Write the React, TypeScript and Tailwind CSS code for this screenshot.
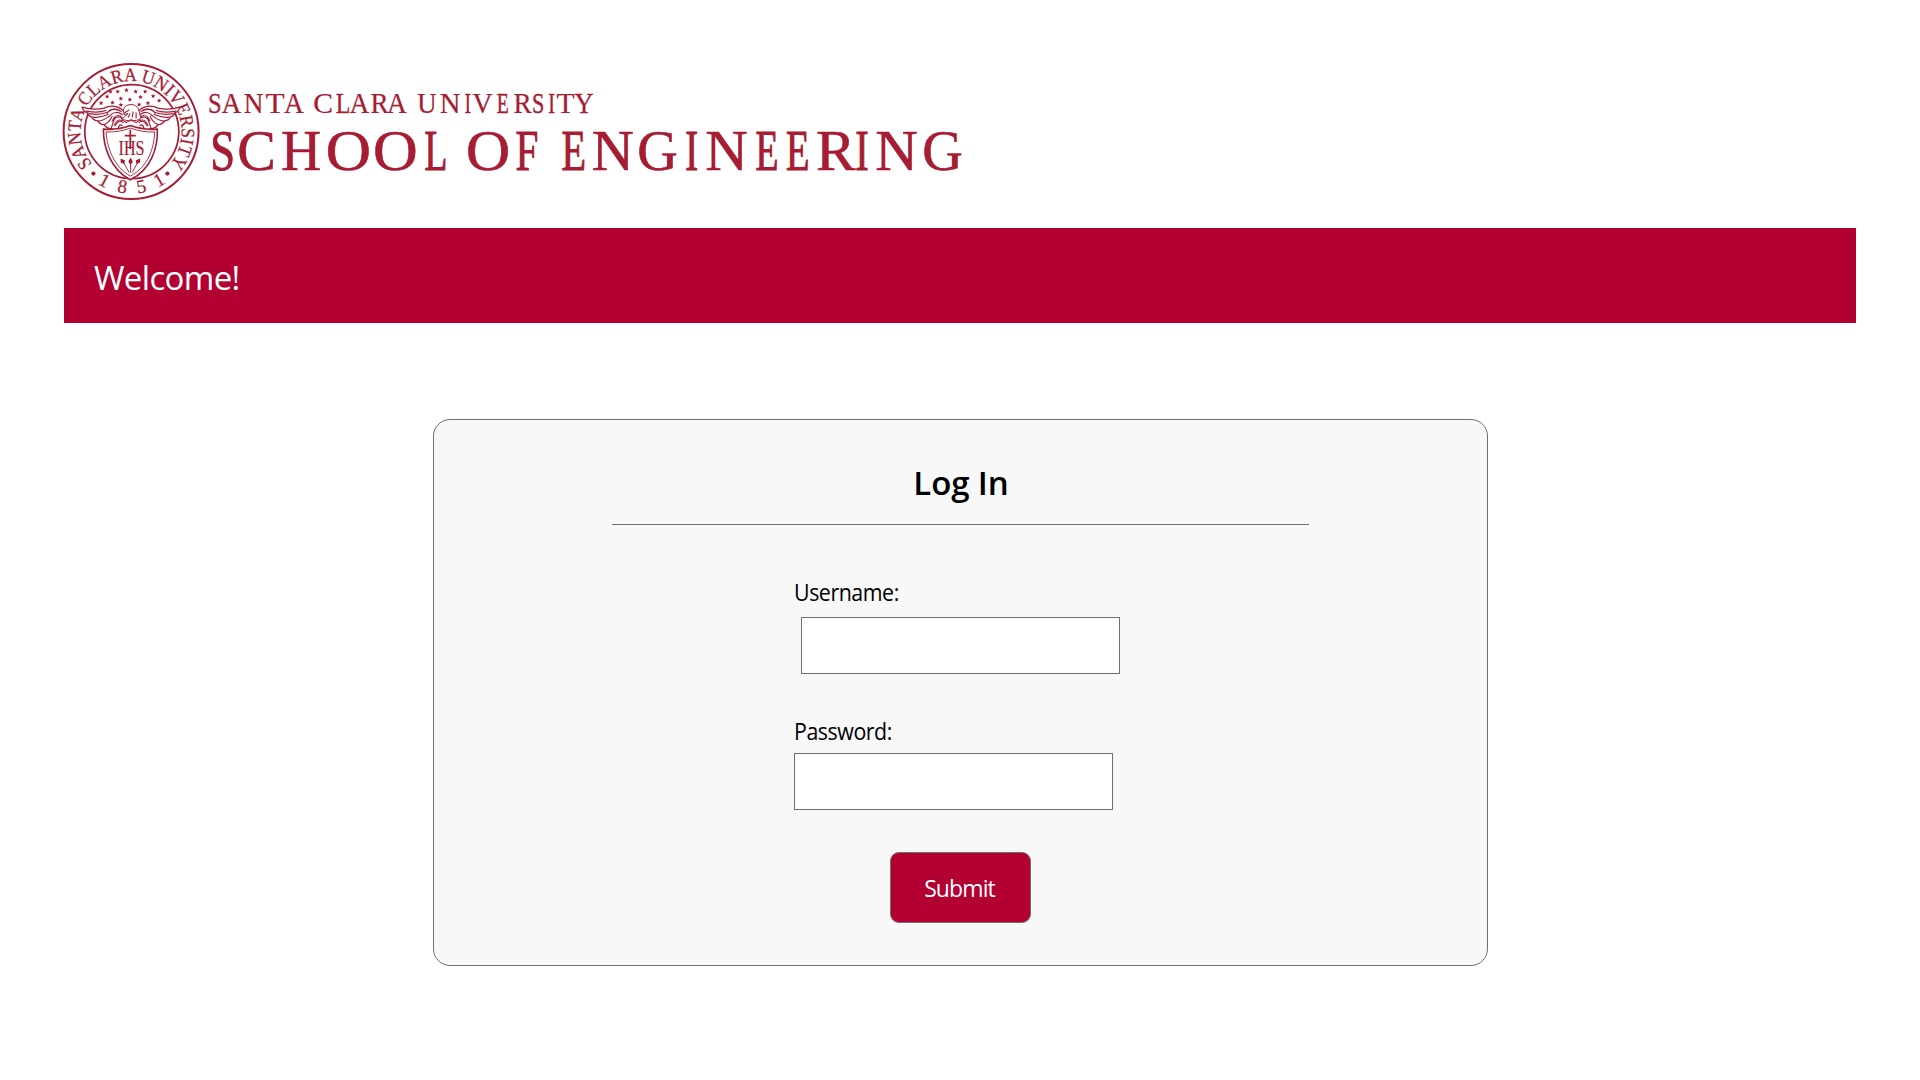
import React from "react";

const RED = "#a51c33";

type Glyph = [string, number, number];

// Liberation Serif capitals: ink left, ink right and advance, in ems.
const METRICS: Record<string, [number, number, number]> = {
  A: [0.015, 0.706, 0.722],
  C: [0.028, 0.633, 0.667],
  E: [0.012, 0.597, 0.611],
  F: [0.012, 0.546, 0.556],
  G: [0.032, 0.709, 0.722],
  H: [0.019, 0.702, 0.722],
  I: [0.018, 0.315, 0.333],
  L: [0.012, 0.598, 0.611],
  N: [0.012, 0.707, 0.722],
  O: [0.034, 0.688, 0.722],
  R: [0.017, 0.659, 0.667],
  S: [0.042, 0.491, 0.556],
  T: [0.017, 0.593, 0.611],
  U: [0.014, 0.705, 0.722],
  V: [0.016, 0.697, 0.722],
  Y: [0.022, 0.703, 0.722],
};

const LINE_ONE: Glyph[] = [
  ["S", 209, 220], ["A", 222, 241], ["N", 244, 263], ["T", 266, 284], ["A", 284.5, 303.5], [" ", 304, 310],
  ["C", 314, 332], ["L", 336, 350], ["A", 350, 369], ["R", 371, 388.5], ["A", 387.5, 406.5], [" ", 408, 414],
  ["U", 417.5, 436], ["N", 440, 460], ["I", 465, 470.5], ["V", 473, 492], ["E", 497, 508.5], ["R", 514, 531.5],
  ["S", 533, 543], ["I", 548.5, 554.5], ["T", 557, 574], ["Y", 575, 593],
];

const LINE_TWO: Glyph[] = [
  ["S", 212, 232], ["C", 239, 274], ["H", 282, 320], ["O", 328, 369], ["O", 375, 415.5], ["L", 425, 447], [" ", 450, 460],
  ["O", 468, 508], ["F", 516, 538], [" ", 541, 550],
  ["E", 562, 585.5], ["N", 592.5, 633], ["G", 639, 677], ["I", 686, 697.5], ["N", 706, 747], ["E", 756, 778],
  ["E", 786.5, 809], ["R", 817, 855], ["I", 856, 868], ["N", 876, 917], ["G", 924, 962],
];

function Inscription({ glyphs, size, y, weight }: { glyphs: Glyph[]; size: number; y: number; weight: number }) {
  return (
    <text y={y} fontSize={size} fill={RED} stroke={RED} strokeWidth={weight} xmlSpace="preserve">
      {glyphs.map(([char, left, right], i) => {
        const m = METRICS[char];
        if (!m) {
          return <tspan key={i} x={left}>{char}</tspan>;
        }
        const em = (right - left) / (m[1] - m[0]);
        // Condensed letters lose stem width, so they get a slightly heavier outline.
        const extra = Math.max(0, 1 - em / size) * size * 0.025;
        return (
          <tspan key={i} x={left - m[0] * em} textLength={m[2] * em} lengthAdjust="spacingAndGlyphs" strokeWidth={weight + extra}>
            {char}
          </tspan>
        );
      })}
    </text>
  );
}

const STARS: [number, number][] = [
  [-20.6, -40], [-13.4, -40], [-4.6, -41.4], [4.6, -40], [14, -40], [-24, -35], [-30, -28.5], [-18.6, -29], [-10.3, -33],
  [-1.3, -32], [9.4, -34.5], [8, -27], [16.8, -28.5], [22, -35.5], [28, -31], [-10.3, -26.8],
];

function Star({ x, y, r = 2.4 }: { x: number; y: number; r?: number }) {
  const pts = Array.from({ length: 10 }, (_, i) => {
    const a = (Math.PI * i) / 5 - Math.PI / 2;
    const k = i % 2 ? r * 0.45 : r;
    return `${x + k * Math.cos(a)},${y + k * Math.sin(a)}`;
  }).join(" ");
  return <polygon points={pts} fill={RED} />;
}

function Wing() {
  return (
    <g fill="none" stroke={RED} strokeLinecap="round" strokeLinejoin="round">
      <path fill="white" strokeWidth="1.3" d="M7 -20 C12 -26 20 -27 27 -23.5 C34 -22 41 -22 49 -24.5 C48 -21 46 -19.500 43 -18.500 C44 -18 43 -16 39 -14.500 C39 -12 36 -11 33 -10.500 C32 -8 30 -7 27 -7 C25 -4 22 -3 20 -3 C16 -1 11 -1 8 -4" />
      <path strokeWidth="1.1" d="M45 -20.500 C37 -19 31 -19 25 -21 M42 -18 C35 -16.500 30 -17 24 -19 M38 -14.500 C32 -13.500 28 -15 23 -17 M33 -10.500 C29 -10.500 25 -13 21 -16 M27 -7 C24 -8 21 -11 19 -15 M20 -3 C19 -6 18 -10 16 -14" />
      <path strokeWidth="1.200" d="M10 -20 C14 -23 20 -23 23 -20 M9 -17 C13 -20 18 -20 21 -16 M8 -13 C12 -16 15 -15 18 -11 M8 -9 C11 -12 14 -10 16 -6 M9 -6 C11 -8 12 -6 13 -3" />
      <path strokeWidth="1.100" strokeDasharray="1 1.1" d="M12 -21.500 C17 -24 22 -22 24 -18 M10 -15 C14 -18 18 -14 19 -10 M9 -11 C13 -13 15 -10 17 -6" />
    </g>
  );
}

function Seal() {
  return (
    <g transform="translate(131.1 131.600)">
      <circle r="67.500" fill="white" stroke={RED} strokeWidth="2" />
      <circle r="47" cx="0.700" cy="0" fill="none" stroke={RED} strokeWidth="1.700" />
      <defs>
        <path id="seal-top" d="M-38.700 32.500 A50.500 50.500 0 1 1 38.700 32.500" />
        <path id="seal-bottom" d="M-62 0 A62 62 0 0 0 62 0" />
      </defs>
      <g fill={RED} fontSize="19" stroke={RED} strokeWidth="0.250">
        <text>
          <textPath href="#seal-top" startOffset="0" textLength="229" lengthAdjust="spacingAndGlyphs">SANTA CLARA UNIVERSITY</textPath>
        </text>
        <text>
          <textPath href="#seal-bottom" startOffset="61.500" textLength="73">1851</textPath>
        </text>
      </g>
      <circle cx="-37.700" cy="42" r="2.100" fill={RED} />
      <circle cx="36.300" cy="42" r="2.100" fill={RED} />
      {STARS.map(([x, y], i) => <Star key={i} x={x} y={y} />)}
      <Wing />
      <g transform="scale(-1 1)"><Wing /></g>
      <path d="M-7 -17 C-9 -23 -6 -27 0 -27 C5 -27 7 -24 8 -20 L10 -13 C5 -10 -5 -10 -10 -13 C-6 -13 -6 -17 -3 -18 Z" fill="white" stroke={RED} strokeWidth="1" />
      <path d="M-7 -18 C-5 -21 -3 -20 -2 -22 M2 -20 L1 -14 M5 -19 L5 -13 M-3 -14 L-1 -18 M-9 -12 L-5 -9 L0 -12 L5 -9 L9 -12" fill="none" stroke={RED} strokeWidth="1.100" />
      <path d="M-0.800 -6 C8 -3 17 -1.500 26.200 -2.500 C27 16 20 38 -0.800 48.200 C-20 38 -28 16 -27.700 -2.500 C-18 -1.500 -9 -3 -0.800 -6 Z" fill="white" stroke={RED} strokeWidth="1.600" />
      <path d="M-0.800 -3.500 C8 -0.500 16 0.800 23.500 0.300 C23 17 17 35 -0.800 44.500 C-17 35 -24 17 -25 0.300 C-17 0.800 -9 -0.500 -0.800 -3.500 Z" fill="none" stroke={RED} strokeWidth="0.900" />
      <text x="-12.500" y="23" fontSize="20" textLength="26" lengthAdjust="spacingAndGlyphs" fill={RED} stroke={RED} strokeWidth="0.200">IHS</text>
      <path d="M-0.800 -1.800 V17.500 M-6.300 4 H4.700" stroke={RED} strokeWidth="1.800" fill="none" />
      <path d="M-8 30 L-2 41 M-0.500 29 V41 M7 30 L1 41" stroke={RED} strokeWidth="0.900" fill="none" />
      <g fill={RED}>
        <path d="M-10.500 27 L-6 29 L-7 32.500 L-10.500 31 Z" />
        <path d="M-0.500 26 L1.700 30 L-0.500 33.500 L-2.700 30 Z" />
        <path d="M9 27 L9 31 L5.500 32.500 L4.500 29 Z" />
      </g>
    </g>
  );
}

function Logo() {
  return (
    <svg className="block h-[228px] w-[1000px]" viewBox="0 0 1000 228" fontFamily='"Liberation Serif", serif' role="img" aria-label="Santa Clara University School of Engineering">
      <Seal />
      <Inscription glyphs={LINE_ONE} size={28.5} y={112.7} weight={0.2} />
      <Inscription glyphs={LINE_TWO} size={57} y={170.3} weight={0.6} />
    </svg>
  );
}

export default function App() {
  return (
    <div className="h-screen overflow-hidden bg-white font-['Open_Sans',sans-serif] text-black">
      <header>
        <Logo />
        <div className="mx-16 flex h-[95px] items-center bg-[#b30032] pl-[30px] text-white">
          <h1 className="pt-[3px] text-[33px] leading-none tracking-[-0.65px]">Welcome!</h1>
        </div>
      </header>
      <main className="mt-24 ml-[433px] flex h-[547px] w-[1055px] flex-col items-center rounded-[17px] border border-[#707070] bg-[#f8f8f8]">
        <h2 className="mt-[42px] mr-px h-[63px] w-[697px] border-b border-[#707070] pl-0.5 text-center text-[33px] leading-[42px] font-semibold tracking-[-0.1px]">Log In</h2>
        <form className="flex w-[333px] flex-col">
          <label htmlFor="username" className="mt-[51px] h-8 origin-left scale-x-[0.93] text-[23px] leading-8 tracking-[-0.5px]">Username:</label>
          <input id="username" className="mt-[9px] ml-[7px] h-[57px] w-[319px] border border-[#707070] bg-white px-3 outline-none" />
          <label htmlFor="password" className="mt-[41px] h-8 origin-left scale-x-[0.93] text-[23px] leading-8 tracking-[-0.5px]">Password:</label>
          <input id="password" type="password" className="mt-1.5 h-[57px] w-[319px] border border-[#707070] bg-white px-3 outline-none" />
          <button type="button" className="mt-[42px] ml-24 h-[71px] w-[141px] rounded-[9px] border border-[#707070] bg-[#b30032] pt-0.5 pr-0.5 text-[23px] tracking-[-0.9px] text-white">Submit</button>
        </form>
      </main>
    </div>
  );
}
